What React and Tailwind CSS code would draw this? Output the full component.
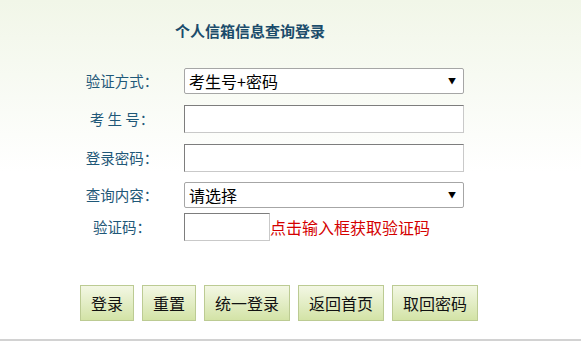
import { useState } from 'react';

const cn = '"Noto Sans CJK SC", "Liberation Sans", sans-serif';

function Label({ children }) {
  return (
    <div className="w-[124px] text-center text-[14.5px] text-[#1f5878] shrink-0">
      {children}
    </div>
  );
}

function FakeSelect({ value }) {
  return (
    <div className="w-[280px] h-[26px] border border-[#a6a6a6] rounded-[2px] bg-white flex items-center justify-between pl-[4px] pr-[7px]">
      <span className="text-[16px] text-black leading-none">{value}</span>
      <span className="text-[8px] text-black leading-none">▼</span>
    </div>
  );
}

function TextBox({ width = 'w-[280px]' }) {
  return (
    <div
      className={`${width} h-[28px] bg-white border border-t-[#7d7d7d] border-l-[#7d7d7d] border-b-[#c9c9c9] border-r-[#c9c9c9]`}
    />
  );
}

const buttons = [
  { label: '登录', w: 'w-[54px]' },
  { label: '重置', w: 'w-[54px]' },
  { label: '统一登录', w: 'w-[86px]' },
  { label: '返回首页', w: 'w-[86px]' },
  { label: '取回密码', w: 'w-[86px]' },
];

export default function App() {
  const [method] = useState('考生号+密码');

  return (
    <div
      className="w-[581px] h-[344px] overflow-hidden bg-gradient-to-b from-[#f1f6e8] via-white to-white flex flex-col"
      style={{ fontFamily: cn }}
    >
      {/* Title */}
      <div className="pt-[20px] pl-[175px] text-[15px] font-bold text-[#1b4c6b] leading-[22px]">
        个人信箱信息查询登录
      </div>

      {/* Form rows */}
      <div className="pl-[60px] flex flex-col">
        <div className="flex items-center mt-[26px]">
          <Label>验证方式：</Label>
          <FakeSelect value={method} />
        </div>
        <div className="flex items-center mt-[11px]">
          <Label>考 生 号：</Label>
          <TextBox />
        </div>
        <div className="flex items-center mt-[11px]">
          <Label>登录密码：</Label>
          <TextBox />
        </div>
        <div className="flex items-center mt-[10px]">
          <Label>查询内容：</Label>
          <FakeSelect value="请选择" />
        </div>
        <div className="flex items-center mt-[5px]">
          <Label>验证码：</Label>
          <TextBox width="w-[86px]" />
          <span className="text-[16px] text-[#d40000] leading-none">点击输入框获取验证码</span>
        </div>
      </div>

      {/* Buttons */}
      <div className="pl-[80px] mt-[44px] flex gap-[8px]">
        {buttons.map(({ label, w }) => (
          <button
            key={label}
            className={`${w} h-[36px] border border-[#bccb93] bg-gradient-to-b from-[#f3f7e4] to-[#d3e3a6] text-[16px] text-[#111] leading-none`}
          >
            {label}
          </button>
        ))}
      </div>

      <div className="flex-1" />
      <div className="h-[2px] bg-[#d2d2d2] mb-[3px]" />
    </div>
  );
}
